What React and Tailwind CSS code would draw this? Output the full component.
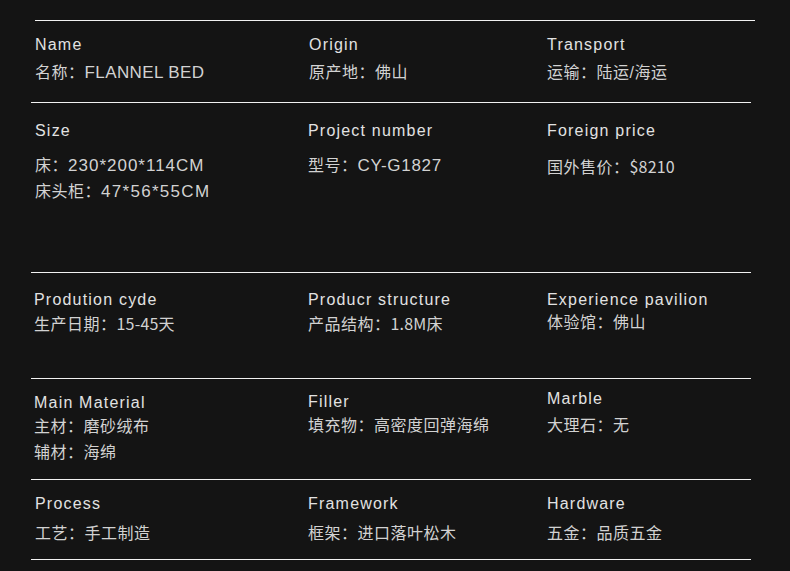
import React from "react";

const N = ({ children }) => (
  <span className="font-['Noto_Sans_CJK_SC',sans-serif] tracking-[0.2px]">{children}</span>
);
const L = ({ children, t = "tracking-[1px]" }) => (
  <span className={"font-['Liberation_Sans',sans-serif] text-[17px] " + t}>{children}</span>
);

function Cell({ label, values, cls = "", gap = "" }) {
  return (
    <div className={"flex flex-col " + cls}>
      <div className="text-[16px] leading-[20px] tracking-[1.2px] text-[#e2e2e2] font-['Liberation_Sans',sans-serif] whitespace-nowrap">
        {label}
      </div>
      <div className={"flex flex-col " + gap}>
        {values.map((v, i) => (
          <div
            key={i}
            className="text-[16px] leading-[26px] tracking-[0.5px] text-[#d2d2d2] font-['Liberation_Sans','Noto_Sans_CJK_SC',sans-serif] whitespace-nowrap"
          >
            {v}
          </div>
        ))}
      </div>
    </div>
  );
}

export default function App() {
  return (
    <div className="w-[790px] h-[571px] bg-[#141414] overflow-hidden">
      <div className="pt-[20px]">
        <div className="ml-[35px] w-[720px] h-px bg-[#f2f2f2]" />
        <div className="ml-[31px] w-[720px]">
          <div className="grid grid-cols-[277px_238px_1fr] h-[82px] border-b border-[#f2f2f2]">
            <Cell
              cls="pt-[14px] pl-[4px]"
              gap="mt-[5px]"
              label="Name"
              values={[<>名称：<L t="tracking-[0.4px]">FLANNEL BED</L></>]}
            />
            <Cell cls="pt-[14px] pl-px" gap="mt-[5px]" label="Origin" values={["原产地：佛山"]} />
            <Cell cls="pt-[14px] pl-px" gap="mt-[5px]" label="Transport" values={["运输：陆运/海运"]} />
          </div>
          <div className="grid grid-cols-[277px_238px_1fr] h-[170px] border-b border-[#f2f2f2]">
            <Cell
              cls="pt-[18px] pl-[4px]"
              gap="mt-[12px]"
              label="Size"
              values={[
                <>床：<L>230*200*114CM</L></>,
                <>床头柜：<L t="tracking-[1.3px]">47*56*55CM</L></>,
              ]}
            />
            <Cell
              cls="pt-[18px]"
              gap="mt-[12px]"
              label="Project number"
              values={[<>型号：<L t="tracking-[0.7px]">CY-G1827</L></>]}
            />
            <Cell
              cls="pt-[18px] pl-px"
              gap="mt-[12px]"
              label="Foreign price"
              values={[<>国外售价：<N>$8210</N></>]}
            />
          </div>
          <div className="grid grid-cols-[277px_238px_1fr] h-[106px] border-b border-[#f2f2f2]">
            <Cell
              cls="pt-[17px] pl-[3px]"
              label="Prodution cyde"
              values={[<>生产日期：<N>15-45天</N></>]}
            />
            <Cell
              cls="pt-[17px]"
              label="Producr structure"
              values={[<>产品结构：<N>1.8M床</N></>]}
            />
            <Cell cls="pt-[17px] pl-px" label="Experience pavilion" values={["体验馆：佛山"]} />
          </div>
          <div className="grid grid-cols-[277px_238px_1fr] h-[101px] border-b border-[#f2f2f2]">
            <Cell
              cls="pt-[14px] pl-[3px]"
              gap="mt-[1px]"
              label="Main Material"
              values={["主材：磨砂绒布", "辅材：海绵"]}
            />
            <Cell cls="pt-[13px]" gap="mt-[1px]" label="Filler" values={["填充物：高密度回弹海绵"]} />
            <Cell cls="pt-[10px] pl-px" gap="mt-[4px]" label="Marble" values={["大理石：无"]} />
          </div>
          <div className="grid grid-cols-[277px_238px_1fr] h-[80px] border-b border-[#f2f2f2]">
            <Cell cls="pt-[14px] pl-[4px]" gap="mt-[7px]" label="Process" values={["工艺：手工制造"]} />
            <Cell cls="pt-[14px]" gap="mt-[7px]" label="Framework" values={["框架：进口落叶松木"]} />
            <Cell cls="pt-[14px] pl-px" gap="mt-[7px]" label="Hardware" values={["五金：品质五金"]} />
          </div>
        </div>
      </div>
    </div>
  );
}
